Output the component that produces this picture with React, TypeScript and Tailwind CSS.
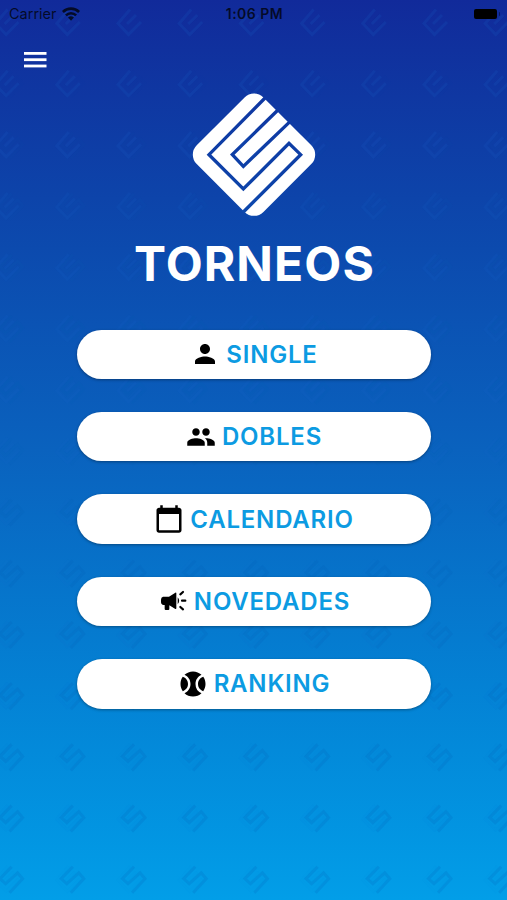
import React from 'react';
import {
  MdPerson,
  MdPeople,
  MdCalendarToday,
  MdSportsBaseball,
} from 'react-icons/md';

interface IconProps {
  size?: number;
  className?: string;
}

const WifiIcon = () => (
  <svg width="18" height="14" viewBox="0 0 18 14" fill="none" stroke="currentColor" strokeWidth="2.6">
    <path d="M.9 5a11.5 11.5 0 0 1 16.2 0" />
    <path d="M3.9 8.4a7.2 7.2 0 0 1 10.2 0" />
    <path d="m9 13.8-3-3.2a4.3 4.3 0 0 1 6 0z" fill="currentColor" stroke="none" />
  </svg>
);

const MenuIcon = () => (
  <svg width="23" height="16" viewBox="0 0 23 16" fill="currentColor">
    <rect width="22.5" height="2.8" />
    <rect y="6.3" width="22.5" height="2.8" />
    <rect y="12.6" width="22.5" height="2.8" />
  </svg>
);

const MegaphoneIcon = ({ size = 30, className }: IconProps) => (
  <svg width={size} height={size} viewBox="0 0 90 90" className={className} fill="currentColor">
    <path d="M15 32h18l19-12q3-1 3 2v45q0 3-3 2L34 58v11q0 3-3 3h-8q-3 0-3-3V57h-3q-8-1-8-9v-7q0-8 6-9z" />
    <path d="M59 34q9 10 0 21z" />
    <path d="m67 25 8-7M72 44h10M67 63l8 7" fill="none" stroke="currentColor" strokeWidth="6.5" strokeLinecap="round" />
  </svg>
);

const Logo = () => (
  <svg width="140" height="140" viewBox="0 0 420 420">
    <mask id="logo-cuts">
      <rect width="420" height="420" fill="white" />
      <g fill="none" stroke="black" strokeWidth="10">
        <path d="M252 33 75 212 178 315 315 178 350 212 172 390" />
        <path d="M325 106 178 247 145 212 288 72" />
      </g>
    </mask>
    <g mask="url(#logo-cuts)">
      <rect x="68.5" y="70.5" width="283" height="283" rx="40" fill="white" transform="rotate(45 210 212)" />
    </g>
  </svg>
);

const ROW = 61.2;
const rows = Array.from({ length: 15 }, (_, i) => i);
const cols = Array.from({ length: 9 }, (_, i) => i);

// The light half of each mark fades out going down, the dark half fades in
const Pattern = () => (
  <svg className="absolute inset-0" width="507" height="900" viewBox="0 0 507 900" fill="none" strokeWidth="3">
    {rows.map((row) =>
      cols.map((col) => (
        <g key={`${row}-${col}`} transform={`translate(${8.6 + col * ROW} ${22 + row * ROW})`}>
          <path
            d="M-1-12.5-13 1.5-2.5 12.5 10 0M-4 2 5-7"
            stroke="#1b6bd0"
            opacity={Math.max(0, 0.15 - row * 0.009)}
          />
          <path
            d="M3-12-8.5 0-3 5 9-6 14 0 1 14"
            stroke="#0460b5"
            opacity={Math.min(0.18, row * 0.02)}
          />
        </g>
      ))
    )}
  </svg>
);

const menuItems = [
  { label: 'SINGLE', Icon: MdPerson },
  { label: 'DOBLES', Icon: MdPeople },
  { label: 'CALENDARIO', Icon: MdCalendarToday },
  { label: 'NOVEDADES', Icon: MegaphoneIcon },
  { label: 'RANKING', Icon: MdSportsBaseball },
];

export default function App() {
  return (
    <div className="relative w-[507px] h-[900px] overflow-hidden bg-linear-to-b from-[#112a9a] via-[#0a62be] to-[#029ee8] font-[Inter,sans-serif]">
      <Pattern />
      <div className="relative flex flex-col">
        <div className="flex items-center justify-between h-7 pl-[9px] pr-[7px] text-[14.5px] text-black/75">
          <div className="flex flex-1 items-center gap-[5px]">
            <span>Carrier</span>
            <WifiIcon />
          </div>
          <span className="text-sm font-semibold tracking-[0.5px]">1:06 PM</span>
          <div className="flex flex-1 items-center justify-end gap-0.5">
            <div className="w-[23px] h-2.5 rounded-[2px] bg-black"></div>
            <div className="w-px h-1 rounded-r bg-black/40"></div>
          </div>
        </div>

        <button className="ml-6 mt-[17px] h-[30px] w-[30px] flex items-center text-white">
          <MenuIcon />
        </button>

        <div className="flex justify-center mt-[9px]">
          <Logo />
        </div>

        <h1 className="mt-4 pl-[2px] text-center text-5xl font-bold tracking-[1.1px] text-white">TORNEOS</h1>

        <nav className="flex flex-col gap-[33px] mt-[41.6px] ml-[77px] mr-[76px]">
          {menuItems.map(({ label, Icon }) => (
            <button
              key={label}
              className="flex items-center justify-center gap-1.5 h-[49.4px] rounded-full bg-white shadow-[0_1px_3px_rgba(0,0,0,0.35)] text-2xl font-semibold tracking-[0.8px] text-[#0c9be2]"
            >
              <Icon size={30} className="text-black" />
              <span className="pt-px">{label}</span>
            </button>
          ))}
        </nav>
      </div>
    </div>
  );
}
